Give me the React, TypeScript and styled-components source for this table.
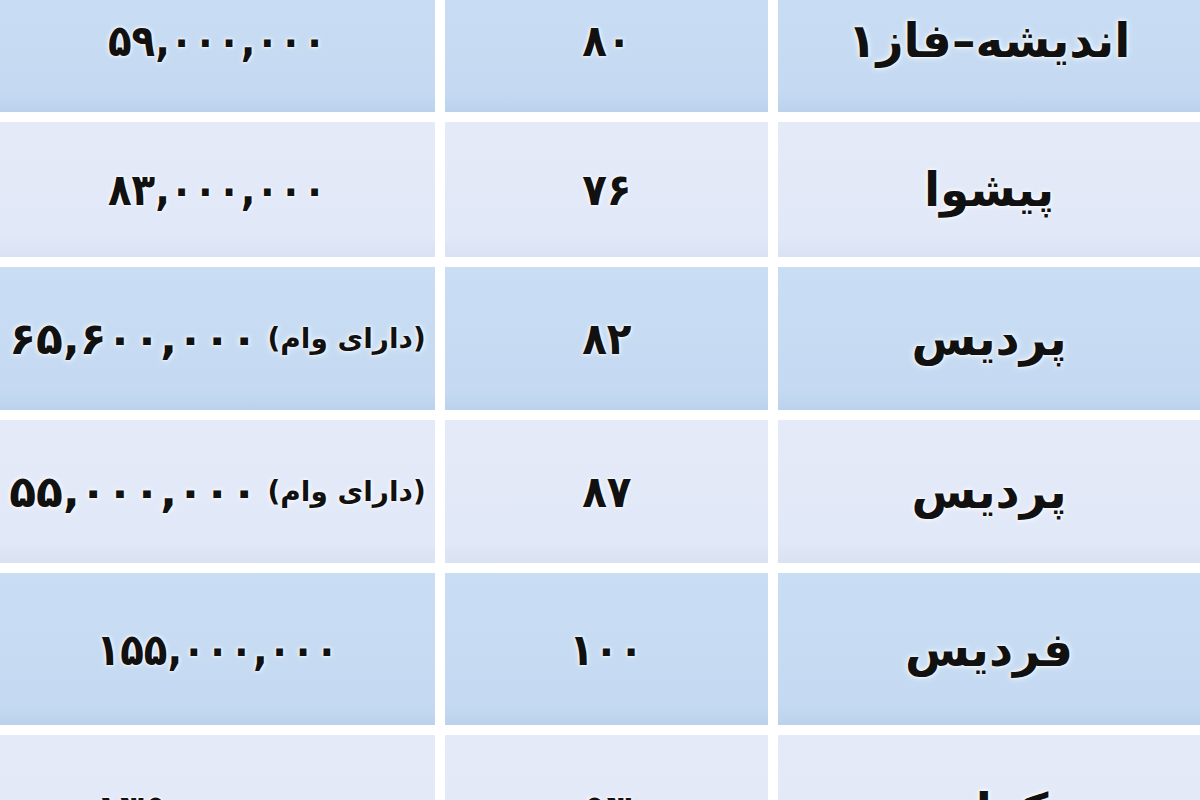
import React from 'react';
import styled, { createGlobalStyle } from 'styled-components';

const GlobalStyle = createGlobalStyle`
  html, body {
    margin: 0;
    padding: 0;
    background: #ffffff;
    overflow: hidden;
  }
  body {
    font-family: "DejaVu Sans", "Noto Sans", sans-serif;
  }
`;

const Page = styled.div`
  width: 1200px;
  height: 800px;
  overflow: hidden;
  background: #ffffff;
`;

const Table = styled.div`
  display: grid;
  direction: ltr;
  grid-template-columns: 435px 323px 1fr;
  grid-template-rows: 144px 135px 143px 143px 152px 150px;
  column-gap: 10px;
  row-gap: 10px;
  margin-top: -32px;
`;

const Cell = styled.div<{ $dark: boolean }>`
  display: flex;
  align-items: center;
  justify-content: center;
  direction: rtl;
  white-space: nowrap;
  overflow: hidden;
  background: ${(p) =>
    p.$dark
      ? 'linear-gradient(180deg, #c9def4 0%, #c5daf2 85%, #bcd2ec 100%)'
      : 'linear-gradient(180deg, #e4eaf8 0%, #e1e8f7 85%, #d9e2f3 100%)'};
  color: #111111;
  font-weight: bold;
  font-size: 44px;
  text-shadow: 0 0 3px #ffffff, 0 0 6px #ffffff;
`;

const Name = styled.span`
  font-size: 47px;
`;

// letter-spacing is ignored for Persian digits, so narrow with scaleX
const Amount = styled.span<{ $squeeze?: number }>`
  display: inline-block;
  direction: ltr;
  unicode-bidi: isolate;
  transform: scaleX(${(p) => p.$squeeze ?? 1});
`;

const Note = styled.span`
  font-size: 28px;
  margin-left: 10px;
`;

interface Row {
  price: string;
  note?: string;
  size: string;
  name: string;
}

const rows: Row[] = [
  { price: '۵۹,۰۰۰,۰۰۰', size: '۸۰', name: 'اندیشه–فاز۱' },
  { price: '۸۳,۰۰۰,۰۰۰', size: '۷۶', name: 'پیشوا' },
  { price: '۶۵,۶۰۰,۰۰۰', note: '(دارای وام)', size: '۸۲', name: 'پردیس' },
  { price: '۵۵,۰۰۰,۰۰۰', note: '(دارای وام)', size: '۸۷', name: 'پردیس' },
  { price: '۱۵۵,۰۰۰,۰۰۰', size: '۱۰۰', name: 'فردیس' },
  { price: '۱۳۵,۰۰۰,۰۰۰', size: '۵۳', name: 'کرانه' },
];

export default function App() {
  return (
    <Page>
      <GlobalStyle />
      <Table>
        {rows.map((r, i) => {
          const dark = i % 2 === 0;
          return (
            <React.Fragment key={i}>
              <Cell $dark={dark}>
                {r.note && <Note>{r.note}</Note>}
                <Amount $squeeze={r.note ? 1 : 0.88}>{r.price}</Amount>
              </Cell>
              <Cell $dark={dark}>
                <Amount $squeeze={0.92}>{r.size}</Amount>
              </Cell>
              <Cell $dark={dark}>
                <Name>{r.name}</Name>
              </Cell>
            </React.Fragment>
          );
        })}
      </Table>
    </Page>
  );
}
